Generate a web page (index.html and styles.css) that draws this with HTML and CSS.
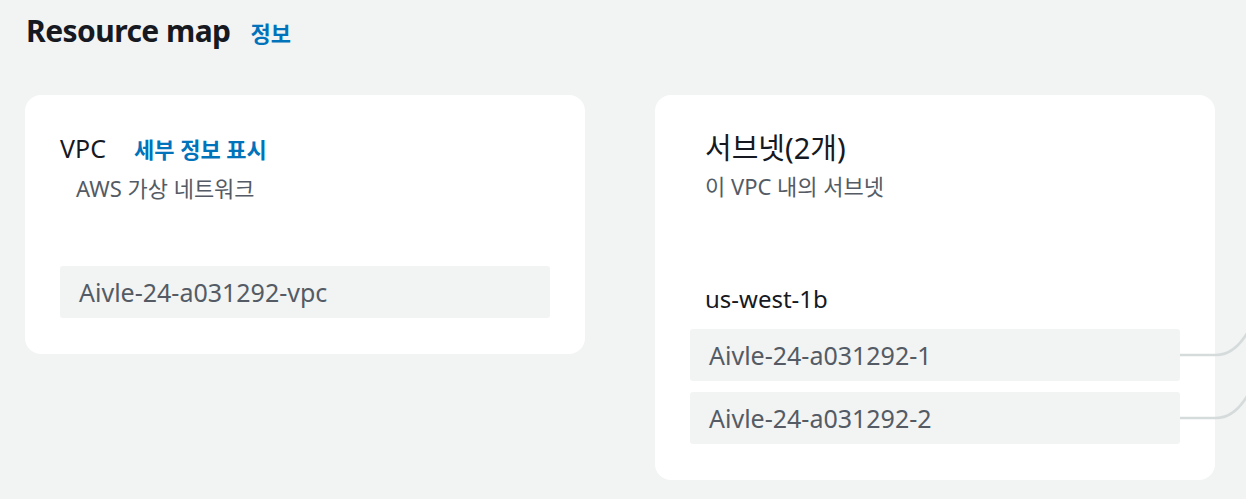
FILE: index.html
```html
<!DOCTYPE html>
<html lang="ko">
<head>
<meta charset="utf-8">
<link rel="stylesheet" href="styles.css">
</head>
<body>
<div class="page">
  <div class="header">
    <h1 class="title">Resource map</h1>
    <a class="info-link">정보</a>
  </div>
  <div class="cards">
    <section class="card card-vpc">
      <div class="card-head">
        <span class="card-title">VPC</span>
        <a class="detail-link">세부 정보 표시</a>
      </div>
      <div class="card-sub indent">AWS 가상 네트워크</div>
      <div class="items vpc-items">
        <div class="item">Aivle-24-a031292-vpc</div>
      </div>
    </section>
    <section class="card card-subnet">
      <div class="card-head pad-left">
        <span class="card-title big">서브넷(2개)</span>
      </div>
      <div class="card-sub sub-tight pad-left">이 VPC 내의 서브넷</div>
      <div class="zone pad-left">us-west-1b</div>
      <div class="items">
        <div class="item linked">Aivle-24-a031292-1
          <svg class="connector" width="70" height="44" viewBox="0 0 70 44"><path d="M0 38 H36 Q60 38 76 -2" fill="none" stroke="#d5dbdb" stroke-width="2.5"/></svg>
        </div>
        <div class="item linked">Aivle-24-a031292-2
          <svg class="connector" width="70" height="44" viewBox="0 0 70 44"><path d="M0 38 H36 Q60 38 76 -2" fill="none" stroke="#d5dbdb" stroke-width="2.5"/></svg>
        </div>
      </div>
    </section>
  </div>
</div>
</body>
</html>
```
FILE: styles.css
```css
html, body {
  margin: 0;
  padding: 0;
  background: #f2f3f3;
  font-family: "Noto Sans", "Noto Sans CJK KR", sans-serif;
  overflow: hidden;
}
.page {
  padding: 10px 25px 0 25px;
  width: 1246px;
  box-sizing: border-box;
}
.header {
  display: flex;
  align-items: baseline;
  gap: 20px;
  height: 85px;
}
.title {
  margin: 0;
  font-size: 30px;
  font-weight: 700;
  color: #16191f;
  letter-spacing: -0.55px;
  line-height: 42px;
  padding-left: 1px;
}
.info-link {
  color: #0073bb;
  font-size: 22px;
  font-weight: 700;
}
.cards {
  display: flex;
  gap: 70px;
  align-items: flex-start;
}
.card {
  width: 560px;
  background: #ffffff;
  border-radius: 16px;
  box-sizing: border-box;
  padding: 38px 35px 36px 35px;
  position: relative;
}
.card-head {
  display: flex;
  align-items: baseline;
  gap: 28px;
  height: 30px;
  line-height: 30px;
}
.card-title {
  font-size: 25px;
  color: #16191f;
  line-height: 30px;
}
.card-title.big {
  font-size: 29px;
}
.detail-link {
  color: #0073bb;
  font-size: 22px;
  font-weight: 700;
}
.card-sub {
  font-size: 22px;
  color: #545b64;
  line-height: 26px;
  margin-top: 12px;
}
.card-sub.sub-tight {
  margin-top: 10px;
}
.indent {
  padding-left: 16px;
}
.pad-left {
  padding-left: 15px;
}
.vpc-items {
  margin-top: 65px;
}
.zone {
  font-size: 24px;
  color: #16191f;
  margin-top: 85px;
  line-height: 30px;
}
.items {
  display: flex;
  flex-direction: column;
  gap: 11px;
}
.card-subnet .items {
  margin-top: 15px;
}
.item {
  background: #f2f3f3;
  border-radius: 3px;
  height: 52px;
  display: flex;
  align-items: center;
  padding-left: 19px;
  font-size: 25px;
  color: #545b64;
  position: relative;
}
.connector {
  position: absolute;
  left: 100%;
  top: -12px;
  overflow: visible;
}
```
